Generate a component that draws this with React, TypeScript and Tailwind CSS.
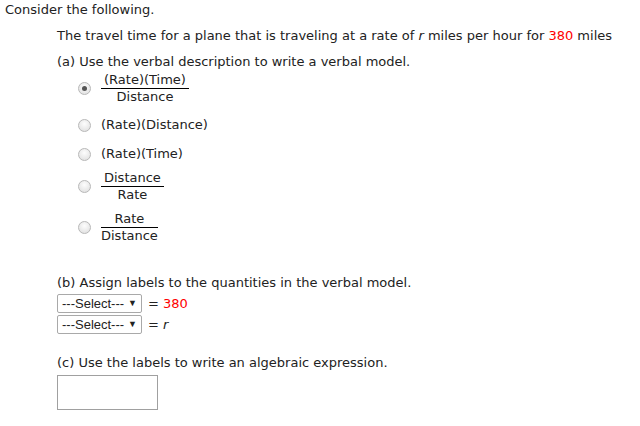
import React from "react";

function Radio({ checked }: { checked?: boolean }) {
  return (
    <span className="relative inline-block h-[13px] w-[13px] shrink-0 rounded-full border border-[#b8b8b8] bg-[radial-gradient(circle_at_50%_35%,#fdfdfd,#dcdcdc)]">
      {checked && (
        <span className="absolute left-[3px] top-[3px] h-[5px] w-[5px] rounded-full bg-[#555]" />
      )}
    </span>
  );
}

function Fraction({ top, bottom }: { top: string; bottom: string }) {
  return (
    <span className="inline-flex flex-col items-center">
      <span className="w-full border-b border-black px-[3px] text-center leading-[16px]">
        {top}
      </span>
      <span className="text-center leading-[16px]">{bottom}</span>
    </span>
  );
}

function Select() {
  return (
    <div className="flex h-[19px] w-[85px] items-center justify-between rounded-[2px] border border-[#a9a9a9] bg-white pl-[4px] pr-[4px] font-['Liberation_Sans',Arial,sans-serif] text-[13px] text-[#222]">
      <span>---Select---</span>
      <span className="text-[9px]">▼</span>
    </div>
  );
}

export default function App() {
  return (
    <div className="min-h-[426px] w-[640px] bg-white font-['DejaVu_Sans',Verdana,sans-serif] text-[13px] text-[#222]">
      <p className="pl-[5px] pt-[2px] leading-[16px]">Consider the following.</p>

      <div className="pl-[57px]">
        <p className="mt-[10px] leading-[16px]">
          The travel time for a plane that is traveling at a rate of <i>r</i> miles per hour for{" "}
          <span className="text-[#ff0000]">380</span> miles
        </p>

        <p className="mt-[10px] leading-[16px]">
          (a) Use the verbal description to write a verbal model.
        </p>

        <div className="ml-[21px] mt-[2px] flex flex-col">
          <div className="flex items-center gap-[10px]">
            <span className="mt-[4px]">
              <Radio checked />
            </span>
            <Fraction top="(Rate)(Time)" bottom="Distance" />
          </div>
          <div className="mt-[12px] flex items-center gap-[10px]">
            <Radio />
            <span className="leading-[16px]">(Rate)(Distance)</span>
          </div>
          <div className="mt-[13px] flex items-center gap-[10px]">
            <Radio />
            <span className="leading-[16px]">(Rate)(Time)</span>
          </div>
          <div className="mt-[8px] flex items-center gap-[10px]">
            <span className="mt-[4px]">
              <Radio />
            </span>
            <Fraction top="Distance" bottom="Rate" />
          </div>
          <div className="mt-[8px] flex items-center gap-[10px]">
            <span className="mt-[4px]">
              <Radio />
            </span>
            <Fraction top="Rate" bottom="Distance" />
          </div>
        </div>

        <p className="mt-[31px] leading-[16px]">
          (b) Assign labels to the quantities in the verbal model.
        </p>
        <div className="mt-[3px] flex flex-col gap-[1px]">
          <div className="flex items-center gap-[6px]">
            <Select />
            <span>
              = <span className="text-[#ff0000]">380</span>
            </span>
          </div>
          <div className="flex items-center gap-[6px]">
            <Select />
            <span>
              = <i>r</i>
            </span>
          </div>
        </div>

        <p className="mt-[21px] leading-[16px]">
          (c) Use the labels to write an algebraic expression.
        </p>
        <div className="mt-[4px] h-[35px] w-[101px] border border-[#a0a0a0] bg-white" />
      </div>
    </div>
  );
}
